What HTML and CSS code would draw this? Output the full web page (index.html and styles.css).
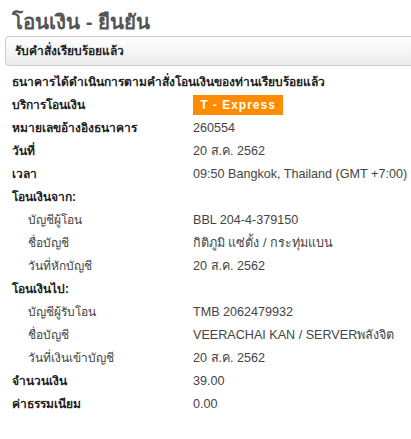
FILE: index.html
```html
<!DOCTYPE html>
<html lang="th">
<head>
  <meta charset="UTF-8" />
  <title>โอนเงิน - ยืนยัน</title>
  <link rel="stylesheet" href="styles.css">
</head>
<body>
  <h1 class="page-title">โอนเงิน - ยืนยัน</h1>
  <div class="status-bar">รับคำสั่งเรียบร้อยแล้ว</div>
  <p class="intro">ธนาคารได้ดำเนินการตามคำสั่งโอนเงินของท่านเรียบร้อยแล้ว</p>
  <div class="details">
    <div class="row"><span class="label">บริการโอนเงิน</span><span class="value"><span class="badge">T - Express</span></span></div>
    <div class="row"><span class="label">หมายเลขอ้างอิงธนาคาร</span><span class="value">260554</span></div>
    <div class="row"><span class="label">วันที่</span><span class="value">20 ส.ค. 2562</span></div>
    <div class="row"><span class="label">เวลา</span><span class="value">09:50 Bangkok, Thailand (GMT +7:00)</span></div>
    <div class="row"><span class="label">โอนเงินจาก:</span></div>
    <div class="row sub"><span class="label">บัญชีผู้โอน</span><span class="value">BBL 204-4-379150</span></div>
    <div class="row sub"><span class="label">ชื่อบัญชี</span><span class="value">กิติภูมิ แซ่ตั้ง / กระทุ่มแบน</span></div>
    <div class="row sub"><span class="label">วันที่หักบัญชี</span><span class="value">20 ส.ค. 2562</span></div>
    <div class="row"><span class="label">โอนเงินไป:</span></div>
    <div class="row sub"><span class="label">บัญชีผู้รับโอน</span><span class="value">TMB 2062479932</span></div>
    <div class="row sub"><span class="label">ชื่อบัญชี</span><span class="value">VEERACHAI KAN / SERVERพลังจิต</span></div>
    <div class="row sub"><span class="label">วันที่เงินเข้าบัญชี</span><span class="value">20 ส.ค. 2562</span></div>
    <div class="row"><span class="label">จำนวนเงิน</span><span class="value">39.00</span></div>
    <div class="row"><span class="label">ค่าธรรมเนียม</span><span class="value">0.00</span></div>
  </div>
</body>
</html>
```

FILE: styles.css
```css
body {
  margin: 0;
  font-family: "Liberation Sans", sans-serif;
  font-size: 12px;
  color: #333;
  background: #fff;
  overflow: hidden;
}
.page-title {
  margin: 0;
  padding: 5px 0 0 12px;
  height: 31px;
  font-size: 20.5px;
  font-weight: bold;
  color: #555;
}
.status-bar {
  margin-left: 5px;
  margin-right: -5px;
  height: 28px;
  line-height: 28px;
  padding-left: 9px;
  font-weight: bold;
  color: #222;
  border: 1px solid #ccc;
  border-radius: 4px;
  background: linear-gradient(#fff, #ececec);
}
.intro {
  margin: 7px 0 0 12px;
  font-weight: bold;
  color: #222;
  line-height: 18px;
}
.details {
  padding: 2px 0 0 12px;
}
.row {
  display: flex;
  height: 23px;
  align-items: center;
  white-space: nowrap;
}
.label {
  flex-shrink: 0;
  width: 181px;
  font-weight: bold;
  color: #222;
}
.row.sub .label {
  padding-left: 16px;
  width: 165px;
  font-weight: normal;
  color: #444;
}
.value {
  font-size: 12.6px;
  color: #444;
}
.badge {
  display: inline-block;
  width: 90px;
  height: 20px;
  line-height: 20px;
  text-align: center;
  background: #ff8c00;
  color: #fff;
  font-size: 12px;
  font-weight: bold;
  letter-spacing: 1px;
}
```
